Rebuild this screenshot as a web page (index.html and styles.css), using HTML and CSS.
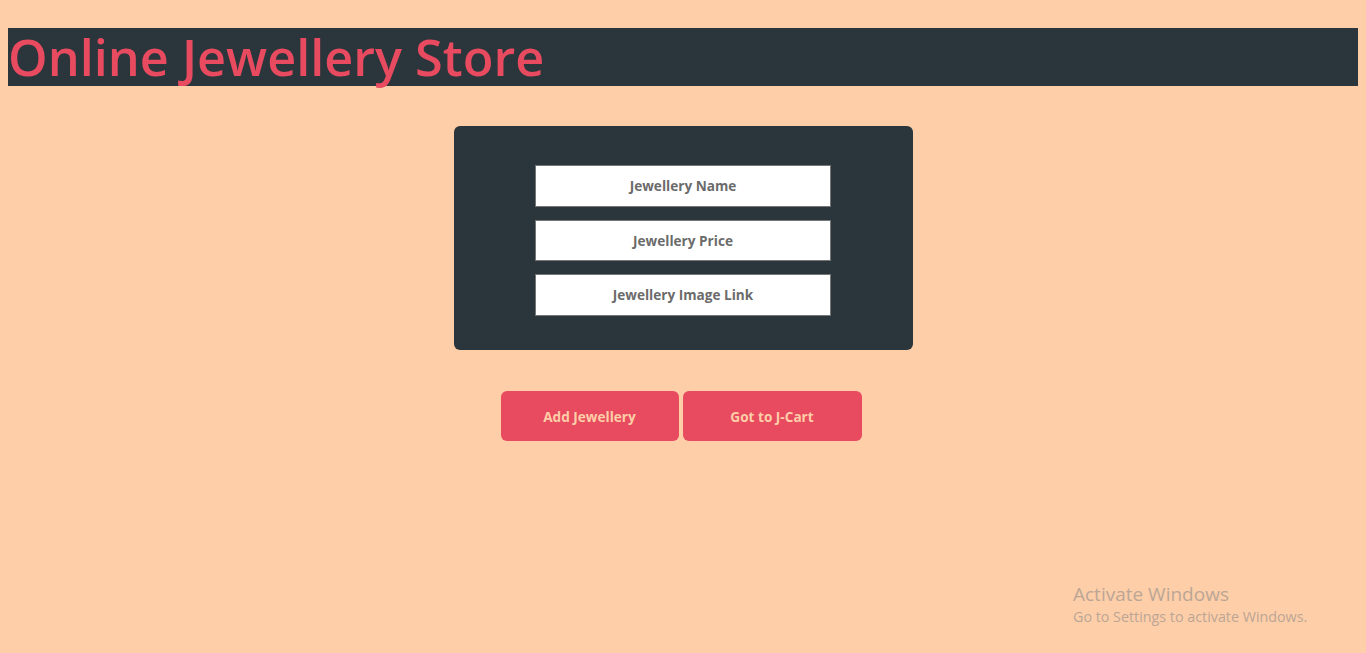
FILE: index.html
```html
<!DOCTYPE html>
<html>
<head>
<meta charset="utf-8">
<title>Online Jewellery Store</title>
<link rel="stylesheet" href="styles.css">
</head>
<body>
<h1 class="title">Online Jewellery Store</h1>
<main class="content">
  <form class="card">
    <input class="field" type="text" placeholder="Jewellery Name">
    <input class="field" type="text" placeholder="Jewellery Price">
    <input class="field" type="text" placeholder="Jewellery Image Link">
  </form>
  <div class="actions">
    <button class="btn" type="button">Add Jewellery</button>
    <button class="btn" type="button">Got to J-Cart</button>
  </div>
</main>
<div class="watermark">
  <div class="wm-title">Activate Windows</div>
  <div class="wm-sub">Go to Settings to activate Windows.</div>
</div>
</body>
</html>
```
FILE: styles.css
```css
html, body {
  margin: 0;
  padding: 0;
}
body {
  background: #fecea8;
  padding: 28px 8px 0;
  font-family: "Open Sans", "DejaVu Sans", sans-serif;
  min-height: 653px;
  box-sizing: border-box;
}
.title {
  margin: 0;
  height: 58px;
  background: #2a363b;
  color: #e84a5f;
  font-family: "Open Sans", sans-serif;
  font-weight: 600;
  font-size: 50.4px;
  line-height: 58px;
  letter-spacing: 0;
}
.content {
  display: flex;
  flex-direction: column;
  align-items: center;
  padding-top: 40px;
}
.card {
  width: 459px;
  height: 224px;
  box-sizing: border-box;
  background: #2a363b;
  border-radius: 6px;
  display: flex;
  flex-direction: column;
  align-items: center;
  gap: 13px;
  padding-top: 39px;
}
.field {
  width: 296px;
  height: 41.5px;
  box-sizing: border-box;
  border: 1px solid #767676;
  background: #fff;
  text-align: center;
  font-family: "Open Sans", sans-serif;
  font-weight: 700;
  font-size: 13.6px;
  color: #6b6b6b;
  outline: none;
  margin: 0;
  padding: 0;
}
.field::placeholder {
  color: #6b6b6b;
  opacity: 1;
}
.actions {
  display: flex;
  gap: 4px;
  margin-top: 41px;
  margin-right: 4px;
}
.btn {
  width: 178px;
  height: 50px;
  border: none;
  border-radius: 6px;
  background: #e84a5f;
  color: #fecea8;
  font-family: "Open Sans", sans-serif;
  font-weight: 700;
  font-size: 13.6px;
  padding: 0;
}
.btn + .btn {
  width: 179px;
}
.watermark {
  position: absolute;
  left: 1073px;
  top: 582px;
  color: #bba696;
  font-family: "Open Sans", sans-serif;
}
.wm-title {
  font-size: 19px;
  line-height: 24px;
}
.wm-sub {
  font-size: 14.3px;
  line-height: 22px;
}
```
